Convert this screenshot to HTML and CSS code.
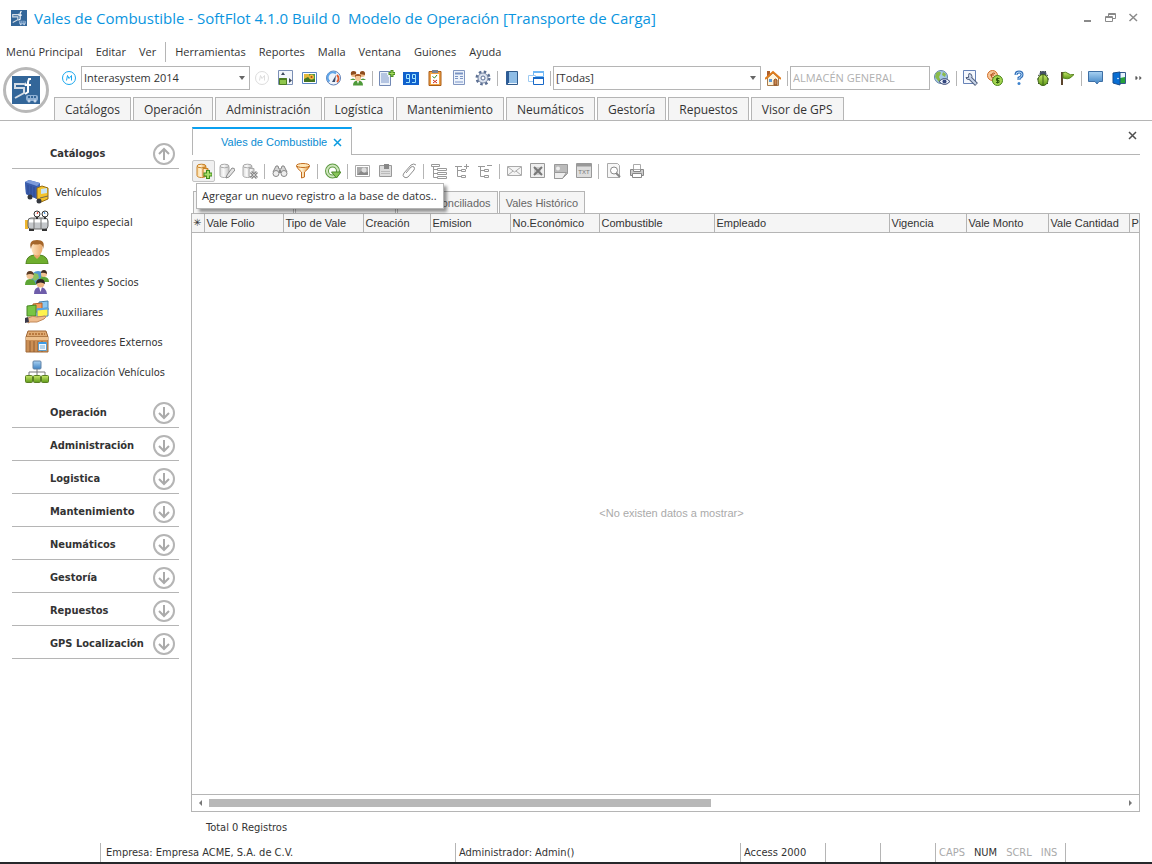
FILE: index.html
```
<!DOCTYPE html>
<html lang="es">
<head>
  <meta charset="UTF-8">
  <meta name="viewport" content="width=device-width, initial-scale=1">
  <title>Vales de Combustible - SoftFlot 4.1.0</title>
  <link rel="stylesheet" href="styles.css">
</head>
<body>

<!-- shared shapes -->
<svg class="defs" aria-hidden="true">
  <defs>
    <linearGradient id="gOrange" x1="0" x2="1"><stop offset="0" stop-color="#fbd79a"/><stop offset=".4" stop-color="#fff1d4"/><stop offset="1" stop-color="#e39a3a"/></linearGradient>
    <linearGradient id="gGray" x1="0" x2="1"><stop offset="0" stop-color="#ddd"/><stop offset=".4" stop-color="#fafafa"/><stop offset="1" stop-color="#c4c4c4"/></linearGradient>
    <linearGradient id="gBlue" x1="0" x2="0" y1="0" y2="1"><stop offset="0" stop-color="#a9d2f3"/><stop offset="1" stop-color="#3f83c4"/></linearGradient>
    <linearGradient id="gGreen" x1="0" x2="0" y1="0" y2="1"><stop offset="0" stop-color="#c8e86a"/><stop offset="1" stop-color="#5f9a18"/></linearGradient>
    <linearGradient id="gSkin" x1="0" x2="1"><stop offset="0" stop-color="#ffe3bd"/><stop offset="1" stop-color="#e9a869"/></linearGradient>
    <symbol id="flot" viewBox="0 0 28 28">
      <path fill="#336699" d="M0 0h28v28H0z"/>
      <path d="M12 8H3v4h9v5l-9 5M12 9l2-2" fill="none" stroke="#d5dde6" stroke-width="2"/>
      <path d="M19 3h-2l-1 3v10l-3 2M13 9h6" fill="none" stroke="#fff" stroke-width="2"/>
      <rect x="14" y="19" width="12" height="6" rx="2" fill="#8fb0d4"/><path d="M16 20h2v2h-2zM19 20h2v2h-2zM22 20h2v2h-2z" fill="#336699"/>
      <circle cx="17" cy="25" r="1.500" fill="#c6d6e8"/><circle cx="23" cy="25" r="1.500" fill="#c6d6e8"/>
    </symbol>
    <symbol id="up" viewBox="0 0 22 22"><circle cx="11" cy="11" r="10" fill="none" stroke="#b5b5b5" stroke-width="2"/><path d="M11 17V6M6 11l5-5 5 5" fill="none" stroke="#aaa" stroke-width="2"/></symbol>
    <symbol id="down" viewBox="0 0 22 22"><circle cx="11" cy="11" r="10" fill="none" stroke="#b5b5b5" stroke-width="2"/><path d="M11 5v11M6 11l5 5 5-5" fill="none" stroke="#aaa" stroke-width="2"/></symbol>
    <symbol id="cyl" viewBox="0 0 16 16"><path d="M1 3.500v9c0 1.300 2 2 4.500 2s4.500-.7 4.500-2v-9" /><ellipse cx="5.500" cy="3" rx="4.500" ry="1.800"/></symbol>
  </defs>
</svg>

<header class="titlebar">
  <svg class="app-icon"><use href="#flot"/></svg>
  <h1>Vales de Combustible - SoftFlot 4.1.0 Build 0&nbsp; Modelo de Operación [Transporte de Carga]</h1>
  <div class="window-buttons">
    <button aria-label="Minimizar"><svg viewBox="0 0 12 12"><path d="M2 9h7" stroke="#8a8a8a" stroke-width="2"/></svg></button>
    <button aria-label="Restaurar"><svg viewBox="0 0 12 12"><path d="M3.500 4V1.500h7v5H8M3.500 2.500h7" fill="none" stroke="#8a8a8a"/><path d="M.5 4.500h7v5h-7zM.5 5.500h7" fill="none" stroke="#8a8a8a"/></svg></button>
    <button aria-label="Cerrar"><svg viewBox="0 0 12 12"><path d="M1.500 2l7.500 7M9 2L1.500 9" stroke="#8a8a8a" stroke-width="1.500"/></svg></button>
  </div>
</header>

<nav class="menu">
  <a href="#">Menú Principal</a>
  <a href="#">Editar</a>
  <a href="#">Ver</a>
  <a href="#" class="split">Herramientas</a>
  <a href="#">Reportes</a>
  <a href="#">Malla</a>
  <a href="#">Ventana</a>
  <a href="#">Guiones</a>
  <a href="#">Ayuda</a>
</nav>

<div class="ribbon">
  <div class="logo"><svg><use href="#flot"/></svg></div>
  <div class="ribbon-rows">
    <div class="toolbar">
      <button aria-label="Módulo"><svg viewBox="0 0 16 16"><circle cx="8" cy="8" r="6.500" fill="#fff" stroke="#1aa7ee"/><path d="M5.500 10.500l1-5 1.500 3 2.500-3v5" fill="none" stroke="#1aa7ee"/></svg></button>
      <div class="combo combo-company"><select aria-label="Empresa"><option>Interasystem 2014</option></select></div>
      <button aria-label="Módulo inactivo" disabled><svg viewBox="0 0 16 16"><circle cx="8" cy="8" r="6.500" fill="#fff" stroke="#ddd"/><path d="M5.500 10.500l1-5 1.500 3 2.500-3v5" fill="none" stroke="#ddd"/></svg></button>
      <button aria-label="Panel"><svg viewBox="0 0 16 16"><path d="M.5.500h14v14H.5z" fill="#f3f6fb" stroke="#7b8fb5"/><path d="M1.500 8.500h7v6h-7z" fill="#8fc64d" stroke="#4c7d22"/><path d="M1.500 8h7v2h-7z" fill="#4c7d22"/><path d="M3 5l2-3 2 3zM11 8l3 2.500-3 2.500z" fill="#3d4a5e"/></svg></button>
      <button aria-label="Imagen"><svg viewBox="0 0 16 16"><path d="M.5 2.500h14v11H.5z" fill="#fff" stroke="#5b86c4"/><path d="M2 4h11v8H2z" fill="#4d9a48"/><path d="M2 4h5v8H2z" fill="#e2b83c"/><path d="M2 9l4-2 3 3 4-1v3H2z" fill="#437521"/><circle cx="9.500" cy="7" r="2.500" fill="#f5b73c"/><circle cx="9.500" cy="7" r="1" fill="#a24917"/></svg></button>
      <button aria-label="Tablero"><svg viewBox="0 0 16 16"><circle cx="7.500" cy="8" r="7" fill="#eef4fc" stroke="#5f7fb5"/><path d="M3.500 11.500A5 5 0 0 1 10 3.500" fill="none" stroke="#5fa5e8" stroke-width="2"/><path d="M11 5A5 5 0 0 1 11 12" fill="none" stroke="#e35a2a" stroke-width="2"/><path d="M6 12l4-7-1 7z" fill="#3c4c6c"/></svg></button>
      <button aria-label="Usuarios"><svg viewBox="0 0 16 16"><path d="M0 10q3-3 6 0zM10 10q3-3 6 0zM3 15.500q0-5 5-5t5 5z" fill="#4f9a3a"/><circle cx="3.500" cy="4.500" r="2.500" fill="#efbd87"/><circle cx="12.500" cy="4.500" r="2.500" fill="#efbd87"/><path d="M1 5q-1-4 2.500-4T6 4zM10 4q-.5-3 2.500-3T15 5z" fill="#8f4d1e"/><circle cx="8" cy="8" r="3" fill="#f5c796"/><path d="M5 8q-1-4 3-4t3 4l-1-2H6z" fill="#a65420"/><path d="M7 11h2l-1 3z" fill="#fff"/></svg></button>
      <span class="sep"></span>
      <button aria-label="Nueva hoja"><svg viewBox="0 0 16 16"><path d="M.5 1.500h11v14H.5z" fill="#edf3fb" stroke="#7289b5"/><path d="M2 4h6M2 6h7M2 8h8M2 10h8M2 12h8" stroke="#7d97c9"/><path d="M13 0v7M9.500 3.500h6.500" stroke="#4d8d20" stroke-width="3"/><path d="M13 1v5M10.500 3.500h5" stroke="#a4dc60"/></svg></button>
      <button aria-label="Contador"><svg viewBox="0 0 16 16"><path d="M0 2h16v13H0z" fill="#1161cd"/><path d="M7 8.500H3.500v-4H6.500v8H3M13 8.500H9.500v-4h3v8H9" fill="none" stroke="#a2e7ff"/></svg></button>
      <button aria-label="Lista de tareas"><svg viewBox="0 0 16 16"><path d="M2 1.500h12v14H2z" fill="#f2a344" stroke="#a95a14"/><path d="M4 4h8v10H4z" fill="#fff"/><path d="M5 0h6v3H5z" fill="#7d8390"/><path d="M5.500 6.500l2 1.500L10 5" fill="none" stroke="#3f8721"/><path d="M6 10l4 3M10 10l-4 3" stroke="#cf2e1a"/></svg></button>
      <button aria-label="Formulario"><svg viewBox="0 0 16 16"><path d="M2.500.5h11v14h-11z" fill="#edf3fb" stroke="#8196c0"/><path d="M4 3.500h8" stroke="#7b94c4" stroke-width="2"/><path d="M4 6.500h3M9 6.500h3M4 8.500h3M9 8.500h3" stroke="#7b94c4"/><path d="M4 12h8" stroke="#b4c4e2" stroke-width="2"/></svg></button>
      <button aria-label="Configuración"><svg viewBox="0 0 16 16"><circle cx="8" cy="8" r="6" fill="none" stroke="#5b6f93" stroke-width="3" stroke-dasharray="2.400 2.312"/><circle cx="8" cy="8" r="5" fill="#dce3ef" stroke="#7b8aa6"/><circle cx="8" cy="8" r="2" fill="#fff" stroke="#5b6f93"/></svg></button>
      <span class="sep"></span>
      <button aria-label="Catálogo"><svg viewBox="0 0 16 16"><path d="M2.500 1.500h11v13h-11z" fill="#8fbde6" stroke="#315b8b"/><path d="M2 2h3v12H2z" fill="#2d5c96"/><path d="M4 13.500h9" stroke="#eef5fc"/></svg></button>
      <button aria-label="Ventanas"><svg viewBox="0 0 16 16"><path d="M5.500 1.500h10v5h-10z" fill="#fff" stroke="#71b8f5"/><path d="M5 2h11" stroke="#71b8f5" stroke-width="2"/><path d="M.5 5.500h7v6h-7z" fill="#fff" stroke="#9ccaf2"/><path d="M5.500 8h10v6.500h-10z" fill="#fff" stroke="#1768c8"/><path d="M5 8h11" stroke="#1768c8" stroke-width="2"/></svg></button>
      <span class="sep"></span>
      <div class="combo combo-filter"><select aria-label="Filtro"><option>[Todas]</option></select></div>
      <button aria-label="Inicio"><svg viewBox="0 0 16 16"><path d="M2 1h3v5H2z" fill="#ae602c"/><path d="M2.500 8L8 3l5.500 5v7.500h-11z" fill="#fff4db" stroke="#a77a4b"/><path d="M0 9l8-7 8 7" fill="none" stroke="#df7c1c" stroke-width="2"/><path d="M9 15V10q1.500-2 3 0v5z" fill="#c98a54" stroke="#8e4d1e"/><path d="M4 9h3v3H4z" fill="#5b9ada"/></svg></button>
      <span class="sep"></span>
      <input class="store" type="text" aria-label="Almacén" placeholder="ALMACÉN GENERAL">
      <button aria-label="Mapa"><svg viewBox="0 0 16 16"><circle cx="7" cy="7" r="6.500" fill="#a5c8e6" stroke="#6584a6"/><path d="M2 3q4-3 5 0L5 7l2 4-2 1-4-5zM9 2l3 2-1 3-3-2z" fill="#8abb4b"/><path d="M5 11.500q5.500-6 11 0-5.500 6-11 0z" fill="#e7edf9" stroke="#3d4b77"/><circle cx="10.500" cy="11.500" r="2" fill="#34477e"/></svg></button>
      <span class="sep"></span>
      <button aria-label="Opciones"><svg viewBox="0 0 16 16"><path d="M.5.500h12v13H.5z" fill="#f5f8fd" stroke="#6783b7"/><path d="M7 8l6.500 6.500" stroke="#53627f" stroke-width="4"/><path d="M6 3.500q3 0 3 3T6 9.500 3 7.500h2.500v-2z" fill="#c9d5ea" stroke="#53627f"/><path d="M7 8l6 6" stroke="#c9d5ea" stroke-width="2"/></svg></button>
      <button aria-label="Monedas"><svg viewBox="0 0 16 16"><circle cx="5.500" cy="5.500" r="5" fill="#f6c79a" stroke="#d16e2a"/><path d="M8 3.500q-3-1.500-3.500 2t3.500 2M3 5h4" fill="none" stroke="#b04c18"/><circle cx="10.500" cy="10.500" r="5" fill="#a3d550" stroke="#4d861c"/><path d="M12.500 8.500h-3v2h2.500v2h-3M10.500 7.500v6" fill="none" stroke="#2f5d0c"/></svg></button>
      <button aria-label="Ayuda"><svg viewBox="0 0 16 16"><path d="M5 5q0-3 3-3t3 2.500T8 8v2" fill="none" stroke="#336fb8" stroke-width="3"/><path d="M5 5q0-3 3-3t3 2.500T8 8v2" fill="none" stroke="#b4d9f8"/><circle cx="8" cy="13.500" r="1.500" fill="#3d83ce"/></svg></button>
      <button aria-label="Depurar"><svg viewBox="0 0 16 16"><path d="M3 5l3 2M13 5l-3 2M2 9h12M3 14l3-3M13 14l-3-3M5 1l2 2M11 1L9 3" stroke="#3d4c34"/><ellipse cx="8" cy="4" rx="3.500" ry="3" fill="#445064"/><ellipse cx="8" cy="10" rx="5" ry="5.500" fill="url(#gGreen)" stroke="#3d6316"/><path d="M8 5v10" stroke="#3d6316"/></svg></button>
      <button aria-label="Bandera"><svg viewBox="0 0 16 16"><path d="M3 2v13" stroke="#5b452d" stroke-width="2"/><path d="M4 2.500q3-1 5 1t6 1q-2 2-4 3.500t-7 0z" fill="url(#gGreen)" stroke="#57851f"/></svg></button>
      <span class="sep"></span>
      <button aria-label="Mensajes"><svg viewBox="0 0 16 16"><path d="M.5 1.500h14v10H11L9 14l-2-2.500H.5z" fill="url(#gBlue)" stroke="#3e6fa5"/></svg></button>
      <button aria-label="Salir"><svg viewBox="0 0 16 16"><path d="M7.500 2.500h6v11h-6z" fill="#e7f3ff" stroke="#33588a"/><path d="M8 8l5-1v6H8z" fill="#26a13a"/><path d="M1 3l7-1v13l-7-2z" fill="#086ed3" stroke="#164c8d"/><circle cx="6" cy="8.500" r=".8" fill="#fff"/></svg></button>
      <button class="more" aria-label="Más"><svg viewBox="0 0 16 16"><path d="M4 6l2 2-2 2zM4 6v4M9 6l2 2-2 2z" fill="#555" stroke="#555"/></svg></button>
    </div>
    <div class="ribbon-tabs">
      <button>Catálogos</button>
      <button>Operación</button>
      <button>Administración</button>
      <button>Logística</button>
      <button>Mantenimiento</button>
      <button>Neumáticos</button>
      <button>Gestoría</button>
      <button>Repuestos</button>
      <button>Visor de GPS</button>
    </div>
  </div>
</div>

<div class="workspace">
  <aside class="sidebar">
    <button class="group">Catálogos<svg><use href="#up"/></svg></button>
    <ul>
      <li><a href="#"><svg viewBox="0 0 24 24"><path d="M0 2l4-2 11 3v14l-3 2L1 14z" fill="#3c66bb"/><path d="M0 2l12 4v13L1 14z" fill="#3a5cab"/><path d="M0 2l4-2 11 3-3 3z" fill="#7d9bdb"/><path d="M3 5v9M6 6v9M9 7v10" stroke="#2c4a94"/><path d="M12 8l5-2 6 2v11l-7 3-4-3z" fill="#f4c32b" stroke="#966a10"/><path d="M16 9l6-1v5l-6 1z" fill="#c8e4f5"/><path d="M15 18l8-2" stroke="#746a50"/><circle cx="5" cy="17" r="2.500" fill="#353940"/><circle cx="14" cy="21" r="2.500" fill="#353940"/></svg>Vehículos</a></li>
      <li><a href="#"><svg viewBox="0 0 24 24"><path d="M0 10h3v9H0z" fill="#efb62d"/><rect x="3" y="8" width="20" height="11" rx="3" fill="#c4c7ca" stroke="#666"/><path d="M4 11h18" stroke="#fff" stroke-width="3"/><path d="M9 8v11M16 8v11" stroke="#777"/><path d="M4 20h5M17 20h5" stroke="#333" stroke-width="2"/><path d="M12 5v4M20 5v4" stroke="#333" stroke-width="2"/><circle cx="12" cy="4" r="3" fill="#fff" stroke="#333"/><circle cx="20" cy="4" r="3" fill="#fff" stroke="#333"/><path d="M12 4l1-2" stroke="#d21"/><path d="M20 4l-1-2" stroke="#27c"/></svg>Equipo especial</a></li>
      <li><a href="#"><svg viewBox="0 0 24 24"><path d="M1 24q0-8 8-9h6q8 1 8 9z" fill="#6fae2e" stroke="#4d7f1c"/><path d="M9 13h6v3l-3 3-3-3z" fill="#e7a368"/><ellipse cx="12" cy="8.500" rx="5.500" ry="7" fill="url(#gSkin)"/><path d="M6 9Q3 0 12 0t6 9q0-4-3-5-4 1-7 0-2 2-2 5z" fill="#a5662a"/></svg>Empleados</a></li>
      <li><a href="#"><svg viewBox="0 0 24 24"><circle cx="13" cy="8" r="7" fill="#5297d2"/><path d="M9 3l4 1 1 4-4 3-3-3zM16 5l4 1-1 5-3-1z" fill="#8ac260"/><path d="M0 15q0-6 5-6t6 6zM14 12q0-5 5-5t5 5z" fill="#5da535"/><circle cx="5" cy="5.500" r="3.500" fill="#f0c393"/><path d="M1.500 5q0-4 3.500-4t4 4q-4-2-7.500 0z" fill="#5b3b24"/><circle cx="19" cy="4" r="3" fill="#f0c393"/><path d="M16 3q0-3 3-3t3 4q-3-2-6-1z" fill="#3f2c20"/><path d="M9 24q0-7 6-7t7 7z" fill="#6e5daa"/><path d="M14 17h3l-1.500 5z" fill="#fff"/><circle cx="15.500" cy="13.500" r="4" fill="#efb785"/><path d="M11 14q0-5 4.500-5t4.500 5q-4-3-9 0z" fill="#2c2524"/></svg>Clientes y Socios</a></li>
      <li><a href="#"><svg viewBox="0 0 24 24"><path d="M14 2l9-1v9h-9z" fill="#8bc6ef" stroke="#4783b2"/><path d="M8 4l9-1v9H8z" fill="#f39a5b" stroke="#b86024"/><path d="M2 6l9-1v11H2z" fill="#78c544" stroke="#468624"/><path d="M12 9l11-1v8l-11 1z" fill="#fff34d" stroke="#4a8ac2"/><path d="M12 9.500l11-1" stroke="#5ba5e4" stroke-width="2"/><path d="M3 18q5-3 9-1l8-1q2 1-1 3l-7 3H5l-2 1z" fill="#efbd8e" stroke="#c28858"/><path d="M0 18l3-1 1 5-4 1z" fill="#3b3a4a"/></svg>Auxiliares</a></li>
      <li><a href="#"><svg viewBox="0 0 24 24"><path d="M3 1h18l2 6H1z" fill="#e0ab73" stroke="#9f6634"/><path d="M4 4h16" stroke="#b9793f" stroke-width="2" stroke-dasharray="2 1"/><path d="M1 7h22v15H1z" fill="#cb8f55" stroke="#a06a3a"/><path d="M5 11v11M9 11v11M13 11v11M17 11v11" stroke="#925d30"/><path d="M1 8.500h22" stroke="#edc08d" stroke-width="3"/><path d="M13.500 12.500h8v8h-8z" fill="#f6fbff" stroke="#619dc8"/><path d="M14 13h7" stroke="#3c9be6" stroke-width="2"/><path d="M15 16h5M15 18h5" stroke="#74afdc"/></svg>Proveedores Externos</a></li>
      <li><a href="#"><svg viewBox="0 0 24 24"><path d="M12 8v4M4 16v-4h16v4M12 12v4" fill="none" stroke="#777"/><rect x="8" y="1" width="8" height="8" rx="1" fill="url(#gBlue)" stroke="#6284a7"/><rect x=".5" y="15.500" width="7" height="7" rx="1" fill="url(#gGreen)" stroke="#5a7e24"/><rect x="8.500" y="15.500" width="7" height="7" rx="1" fill="url(#gGreen)" stroke="#5a7e24"/><rect x="16.500" y="15.500" width="7" height="7" rx="1" fill="url(#gGreen)" stroke="#5a7e24"/></svg>Localización Vehículos</a></li>
    </ul>
    <button class="group">Operación<svg><use href="#down"/></svg></button>
    <button class="group">Administración<svg><use href="#down"/></svg></button>
    <button class="group">Logistica<svg><use href="#down"/></svg></button>
    <button class="group">Mantenimiento<svg><use href="#down"/></svg></button>
    <button class="group">Neumáticos<svg><use href="#down"/></svg></button>
    <button class="group">Gestoría<svg><use href="#down"/></svg></button>
    <button class="group">Repuestos<svg><use href="#down"/></svg></button>
    <button class="group">GPS Localización<svg><use href="#down"/></svg></button>
  </aside>

  <main class="document">
    <div class="doc-tabs">
      <div class="doc-tab">
        <span>Vales de Combustible</span>
        <button aria-label="Cerrar pestaña"><svg viewBox="0 0 9 9"><path d="M1 1l7 7M8 1L1 8" stroke="#0a9be0" stroke-width="1.500"/></svg></button>
      </div>
      <button class="close-all" aria-label="Cerrar"><svg viewBox="0 0 9 9"><path d="M1 1l7 7M8 1L1 8" stroke="#505050" stroke-width="1.500"/></svg></button>
    </div>

    <div class="doc-toolbar">
      <button class="hot" aria-label="Agregar"><svg viewBox="0 0 16 16"><use href="#cyl" fill="url(#gOrange)" stroke="#c98328"/><path d="M7 5.500h5v8H7z" fill="url(#gOrange)" stroke="#c98328"/><path d="M12 7v9M7.500 11.500h9" stroke="#3e8c1c" stroke-width="4"/><path d="M12 8v7M8.500 11.500h7" stroke="#a8dd68" stroke-width="2"/></svg></button>
      <button aria-label="Editar" disabled><svg viewBox="0 0 16 16"><use href="#cyl" fill="url(#gGray)" stroke="#aaa"/><path d="M8 12l5-7q3 0 3 2l-6 7-3 1z" fill="#e3e3e3" stroke="#8b8b8b"/></svg></button>
      <button aria-label="Eliminar" disabled><svg viewBox="0 0 16 16"><use href="#cyl" fill="url(#gGray)" stroke="#aaa"/><path d="M7 5.500h5v8H7z" fill="url(#gGray)" stroke="#aaa"/><path d="M9 9l6 6M15 9l-6 6" stroke="#888" stroke-width="3"/><path d="M9 9l6 6M15 9l-6 6" stroke="#ccc"/></svg></button>
      <span class="sep"></span>
      <button aria-label="Buscar"><svg viewBox="0 0 16 16"><path d="M1 9l3-6h2l1 3h2l1-3h2l3 6" fill="#d5d5d5" stroke="#888"/><circle cx="4" cy="10.500" r="3" fill="#eee" stroke="#888"/><circle cx="12" cy="10.500" r="3" fill="#eee" stroke="#888"/><path d="M7 7h2v3H7z" fill="#888"/></svg></button>
      <button aria-label="Filtrar"><svg viewBox="0 0 16 16"><path d="M1.500 3q0 2 5 6v6l3-1V9q5-4 5-6z" fill="url(#gOrange)" stroke="#c36d20"/><ellipse cx="8" cy="2.500" rx="6.500" ry="2" fill="#ffe9bb" stroke="#c36d20"/></svg></button>
      <span class="sep"></span>
      <button aria-label="Actualizar"><svg viewBox="0 0 16 16"><circle cx="7.500" cy="8" r="5.500" fill="none" stroke="#5d9a42" stroke-width="4"/><circle cx="7.500" cy="8" r="5.500" fill="none" stroke="#cfe6bd" stroke-width="2"/><path d="M6.500 9H16l-4.500 6z" fill="#89c65a" stroke="#4b8629"/></svg></button>
      <span class="sep"></span>
      <button aria-label="Imagen" disabled><svg viewBox="0 0 16 16"><path d="M.5 2.500h14v11H.5z" fill="#fff" stroke="#aaa"/><path d="M2 4h11v8H2z" fill="#aaa"/><circle cx="9" cy="7" r="2.500" fill="#ddd"/><path d="M2 12l4-4 3 2 4-1v3z" fill="#888"/></svg></button>
      <button aria-label="Nota" disabled><svg viewBox="0 0 16 16"><path d="M1.500 2.500h12v11h-12z" fill="#ddd" stroke="#999"/><path d="M6 1h5v5H6z" fill="#888"/><path d="M3 8.500h9M3 10.500h9" stroke="#bbb"/></svg></button>
      <button aria-label="Adjuntar" disabled><svg viewBox="0 0 16 16"><path d="M5 10l5-6q2-1 3 0t0 3l-6 7q-2 1.500-4 0t0-4l7-8q3-2 5 0" fill="none" stroke="#8f8f8f"/></svg></button>
      <span class="sep"></span>
      <button aria-label="Árbol" disabled><svg viewBox="0 0 16 16"><path d="M.5 1.500h8v2h-8zM6.500 5.500h9v2h-9zM6.500 9.500h9v2h-9zM6.500 13.500h9v2h-9zM2.500 4v10.500h4M2.500 6.500h4M2.500 10.500h4" fill="none" stroke="#999"/></svg></button>
      <button aria-label="Expandir" disabled><svg viewBox="0 0 16 16"><path d="M1 3.500h7M3.500 4v9.500h4M3.500 7.500h4M7.500 6.500h4v2h-4zM7.500 12.500h4v2h-4zM10 3.500h5M12.500 1v5" fill="none" stroke="#999"/></svg></button>
      <button aria-label="Contraer" disabled><svg viewBox="0 0 16 16"><path d="M1 3.500h7M3.500 4v9.500h4M3.500 7.500h4M7.500 6.500h4v2h-4zM7.500 12.500h4v2h-4zM10 2.500h5" fill="none" stroke="#999"/></svg></button>
      <span class="sep"></span>
      <button aria-label="Correo" disabled><svg viewBox="0 0 16 16"><path d="M.5 3.500h14v9H.5z" fill="#f5f5f5" stroke="#aaa"/><path d="M1 4l6.500 5L14 4M1 12l5-4M14 12L9 8" fill="none" stroke="#aaa"/></svg></button>
      <button aria-label="Excel" disabled><svg viewBox="0 0 16 16"><path d="M.5.500h14v14H.5z" fill="#eee" stroke="#999"/><path d="M4 4h7v8H4z" fill="#ccc"/><path d="M4 4l8 8M12 4l-8 8" stroke="#777" stroke-width="2"/></svg></button>
      <button aria-label="HTML" disabled><svg viewBox="0 0 16 16"><path d="M1.500 1.500h13v9l-5 5h-8z" fill="#bbb" stroke="#999"/><path d="M1.500 9.500h12l-4 6h-8z" fill="#eee" stroke="#999"/><circle cx="5" cy="5.500" r="2" fill="#eee"/></svg></button>
      <button aria-label="Texto" disabled><svg viewBox="0 0 16 16"><path d="M.5.500h15v14H.5z" fill="#ddd" stroke="#999"/><path d="M1 2h14" stroke="#999" stroke-width="3"/><text x="8" y="11" text-anchor="middle" class="txt">TXT</text></svg></button>
      <span class="sep"></span>
      <button aria-label="Vista previa" disabled><svg viewBox="0 0 16 16"><path d="M1.500.5h10l2 2v12h-12z" fill="#f7f7f7" stroke="#aaa"/><circle cx="8" cy="7.500" r="3.500" fill="#fff" stroke="#888"/><path d="M10 10l4 4" stroke="#888" stroke-width="2"/></svg></button>
      <button aria-label="Imprimir" disabled><svg viewBox="0 0 16 16"><path d="M4.500 1.500h7v5h-7z" fill="#fff" stroke="#aaa"/><path d="M1.500 6.500h3v2h7v-2h3v6h-13z" fill="#ccc" stroke="#888"/><path d="M3.500 10.500h9v4h-9z" fill="#fff" stroke="#888"/></svg></button>
      <div class="tooltip" role="tooltip">Agregar un nuevo registro a la base de datos..</div>
    </div>

    <div class="view-tabs">
      <button class="wide" aria-label="Vales"></button>
      <button class="wide" aria-label="Vales"></button>
      <button>Vales Conciliados</button>
      <button>Vales Histórico</button>
    </div>

    <section class="grid">
      <div class="grid-head">
        <table>
          <colgroup>
            <col style="width:12px"><col style="width:79px"><col style="width:80px"><col style="width:67px"><col style="width:80px"><col style="width:89px"><col style="width:115px"><col style="width:175px"><col style="width:77px"><col style="width:82px"><col style="width:81px"><col style="width:80px">
          </colgroup>
          <thead>
            <tr><th class="mark">✳</th><th>Vale Folio</th><th>Tipo de Vale</th><th>Creación</th><th>Emision</th><th>No.Económico</th><th>Combustible</th><th>Empleado</th><th>Vigencia</th><th>Vale Monto</th><th>Vale Cantidad</th><th>P</th></tr>
          </thead>
        </table>
      </div>
      <div class="empty">&lt;No existen datos a mostrar&gt;</div>
      <div class="scroll">
        <span class="arrow-left"></span>
        <div class="track"><div class="thumb"></div></div>
        <span class="arrow-right"></span>
      </div>
    </section>
    <div class="total">Total 0 Registros</div>
  </main>
</div>

<footer class="status">
  <span class="cell first"></span>
  <span class="cell company">Empresa: Empresa ACME, S.A. de C.V.</span>
  <span class="cell user">Administrador: Admin()</span>
  <span class="cell access">Access 2000</span>
  <span class="cell small"></span>
  <span class="cell small"></span>
  <span class="cell keys"><i>CAPS</i><i class="on">NUM</i><i>SCRL</i><i>INS</i></span>
  <span class="cell"></span>
</footer>

</body>
</html>
```
FILE: styles.css
```
* {
  box-sizing: border-box;
}

body {
  margin: 0;
  min-height: 100vh;
  display: flex;
  flex-direction: column;
  background: #fff;
  color: #333;
  font-family: "Open Sans", "Noto Sans", sans-serif;
  font-size: 11px;
  overflow-x: hidden;
}

button {
  font: inherit;
  color: inherit;
  background: none;
  border: 0;
  padding: 0;
}

a {
  color: inherit;
  text-decoration: none;
}

svg {
  display: block;
  flex: none;
}

.defs {
  position: absolute;
  width: 0;
  height: 0;
}

/* Title bar */
.titlebar {
  display: flex;
  align-items: center;
  height: 40px;
  padding: 0 12px 4px 11px;
}

.app-icon {
  width: 16px;
  height: 16px;
}

.titlebar h1 {
  margin: 0 0 0 7px;
  font-size: 15px;
  font-weight: 400;
  color: #0a95e0;
  white-space: nowrap;
}

.window-buttons {
  display: flex;
  gap: 11px;
  margin-left: auto;
}

.window-buttons svg {
  width: 12px;
  height: 12px;
}

/* Menu */
.menu {
  display: flex;
  align-items: center;
  gap: 13px;
  height: 24px;
  padding: 0 0 1px 6px;
  line-height: 20px;
}

.menu .split {
  border-left: 1px solid #b5b5b5;
  padding-left: 9px;
  margin-left: -4px;
}

/* Ribbon */
.ribbon {
  display: flex;
  border-bottom: 1px solid #b5b5b5;
}

.logo {
  width: 46px;
  height: 46px;
  margin: 3px 5px 0 3px;
  border: 3px solid #b8b8b8;
  border-radius: 50%;
  display: flex;
  align-items: center;
  justify-content: center;
}

.logo svg {
  width: 28px;
  height: 28px;
}

.ribbon-rows {
  flex: 1;
}

.toolbar {
  display: flex;
  align-items: center;
  height: 28px;
  padding-left: 3px;
}

.toolbar button {
  width: 24px;
  height: 24px;
  display: flex;
  align-items: center;
  justify-content: center;
}

.toolbar button.more {
  width: 14px;
}

.toolbar svg,
.doc-toolbar svg {
  width: 16px;
  height: 16px;
}

.toolbar .more svg {
  width: 12px;
  height: 12px;
}

.sep {
  flex: none;
  width: 5px;
  height: 15px;
  background: linear-gradient(#b5b5b5, #b5b5b5) center / 1px 100% no-repeat;
}

.combo {
  position: relative;
  height: 24px;
}

.combo::after {
  content: "";
  position: absolute;
  right: 5px;
  top: 10px;
  border: 3px solid transparent;
  border-top: 4px solid #666;
  pointer-events: none;
}

.combo-company {
  width: 169px;
}

.combo-filter {
  width: 208px;
}

.combo select,
.store {
  appearance: none;
  width: 100%;
  height: 24px;
  padding: 0 2px 2px;
  border: 1px solid #b5b5b5;
  border-radius: 0;
  background: #fff;
  color: #333;
  font: inherit;
}

.store {
  width: 140px;
}

.store::placeholder {
  color: #b0b0b0;
}

.ribbon-tabs {
  display: flex;
  gap: 2px;
  margin-top: 5px;
}

.ribbon-tabs button {
  height: 23px;
  padding: 0 10px;
  border: 1px solid #b5b5b5;
  border-bottom: 0;
  background: #f5f5f5;
  font-size: 12px;
}

/* Sidebar */
.workspace {
  flex: 1;
  display: flex;
}

.sidebar {
  width: 191px;
  padding: 15px 12px 0;
  font-family: "DejaVu Sans Condensed", "DejaVu Sans", sans-serif;
}

.sidebar .group {
  display: flex;
  align-items: center;
  justify-content: space-between;
  width: 100%;
  height: 33px;
  padding: 3px 4px 0 38px;
  border-bottom: 1px solid #b5b5b5;
  font-weight: 700;
}

.group svg {
  width: 22px;
  height: 22px;
}

.sidebar ul {
  list-style: none;
  margin: 8px 0;
  padding: 0;
}

.sidebar li a {
  display: flex;
  align-items: center;
  gap: 6px;
  height: 30px;
  padding-left: 13px;
  white-space: nowrap;
}

.sidebar li svg {
  width: 24px;
  height: 24px;
}

/* Document */
.document {
  flex: 1;
  min-width: 0;
  display: flex;
  flex-direction: column;
  padding: 6px 12px 0 0;
  font-family: "Liberation Sans", Arial, sans-serif;
}

.doc-tabs {
  display: flex;
  align-items: flex-start;
  justify-content: space-between;
  height: 28px;
  margin-left: 1px;
  border-bottom: 1px solid #b5b5b5;
}

.doc-tab {
  display: flex;
  align-items: center;
  justify-content: space-between;
  width: 160px;
  height: 28px;
  padding: 0 9px 0 28px;
  border: 1px solid #b5b5b5;
  border-top: 2px solid #0aa0f0;
  border-bottom: 0;
  background: #fff;
  color: #0a8cd2;
}

.doc-tab svg,
.close-all svg {
  width: 9px;
  height: 9px;
}

.close-all {
  padding: 4px 3px;
}

.doc-toolbar {
  position: relative;
  display: flex;
  align-items: center;
  height: 32px;
  padding-left: 1px;
}

.doc-toolbar button {
  width: 23px;
  height: 22px;
  display: flex;
  align-items: center;
  justify-content: center;
}

.doc-toolbar .hot {
  border: 1px solid #c4c4c4;
  border-radius: 2px;
  background: #f0f0f0;
}

.doc-toolbar .sep {
  width: 7px;
}

.txt {
  font-size: 6px;
  fill: #777;
}

.tooltip {
  position: absolute;
  z-index: 2;
  left: 5px;
  top: 28px;
  padding: 0 6px 0 5px;
  border: 1px solid #b5b5b5;
  background: #fff;
  box-shadow: 3px 3px 3px rgba(0, 0, 0, 0.4);
  font: 11px/24px "Open Sans", "Noto Sans", sans-serif;
  white-space: nowrap;
}

.view-tabs {
  display: flex;
  height: 26px;
  padding: 4px 0 0 2px;
  gap: 1px;
  color: #666;
}

.view-tabs button {
  padding: 0 6px;
  border: 1px solid #b5b5b5;
  border-bottom: 0;
  background: #f5f5f5;
}

.view-tabs .wide {
  width: 101px;
}

/* Grid */
.grid {
  flex: 1;
  display: flex;
  flex-direction: column;
  border: 1px solid #b5b5b5;
}

.grid-head {
  overflow: hidden;
}

.grid table {
  width: 1017px;
  table-layout: fixed;
  border-collapse: collapse;
}

.grid th {
  height: 18px;
  padding: 1px 2px 0;
  border-right: 1px solid #b5b5b5;
  border-bottom: 1px solid #b5b5b5;
  background: #f5f5f5;
  font-weight: 400;
  text-align: left;
  white-space: nowrap;
}

.grid .mark {
  padding: 0 1px;
  font-family: "DejaVu Sans", sans-serif;
  font-size: 10px;
  line-height: 12px;
}

.empty {
  flex: 1;
  display: flex;
  align-items: center;
  justify-content: center;
  padding-left: 12px;
  color: #aaa;
}

.scroll {
  display: flex;
  align-items: center;
  justify-content: space-between;
  height: 17px;
  padding: 0 7px;
  border-top: 1px solid #b5b5b5;
}

.track {
  flex: 1;
  margin: 0 7px;
}

.thumb {
  width: 55%;
  height: 8px;
  background: #b8b8b8;
}

.arrow-left,
.arrow-right {
  border: 3px solid transparent;
}

.arrow-left {
  border-left-width: 0;
  border-right-color: #777;
}

.arrow-right {
  border-right-width: 0;
  border-left-color: #777;
}

.total {
  height: 31px;
  padding-left: 15px;
  font: 11px/31px "DejaVu Sans Condensed", "DejaVu Sans", sans-serif;
}

/* Status bar */
.status {
  display: flex;
  height: 21px;
  border-bottom: 2px solid #26282b;
  font: 11px/20px "DejaVu Sans Condensed", "DejaVu Sans", sans-serif;
  white-space: nowrap;
}

.cell {
  padding-left: 3px;
  border-left: 1px solid #b5b5b5;
}

.first {
  width: 100px;
  border-left: 0;
}

.company {
  width: 355px;
  padding-left: 5px;
}

.user {
  width: 285px;
}

.access {
  width: 85px;
}

.small {
  width: 55px;
}

.keys {
  display: flex;
  gap: 9px;
  width: 130px;
  color: #aaa;
}

.keys i {
  font-style: normal;
}

.keys .on {
  color: #333;
}
```
